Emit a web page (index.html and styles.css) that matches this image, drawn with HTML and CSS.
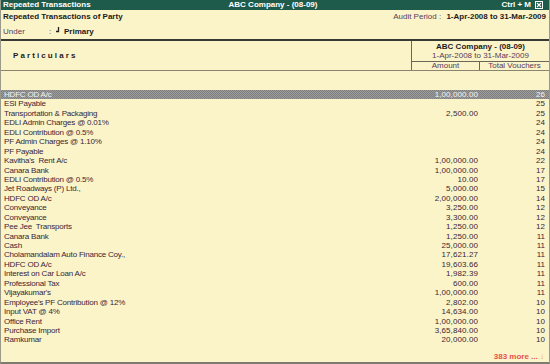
FILE: index.html
```html
<!doctype html>
<html lang="en">
  <head>
    <meta charset="utf-8">
    <meta name="viewport" content="width=device-width, initial-scale=1">
    <title>Repeated Transactions</title>
    <link rel="stylesheet" href="styles.css">
  </head>
  <body>
    <div class="window">
      <div class="titlebar">
        <span class="tb-left">Repeated Transactions</span>
        <span class="tb-center">ABC Company - (08-09)</span>
        <span class="tb-right">Ctrl + M
          <svg class="close" width="8" height="8" viewBox="0 0 8 8">
            <rect x="0.5" y="0.5" width="7" height="7" fill="none" stroke="#fff"/>
            <path d="M2 2 L6 6 M6 2 L2 6" stroke="#fff" stroke-width="1.2"/>
          </svg>
        </span>
      </div>

      <div class="report-head">
        <div class="head-line">
          <span class="report-title">Repeated Transactions of Party</span>
          <span class="audit">Audit Period : <b>1-Apr-2008 to 31-Mar-2009</b></span>
        </div>
        <div class="head-line under">
          <span class="under-label">Under</span>
          <span class="colon">:</span>
          <svg class="hook" width="5" height="6" viewBox="0 0 5 6">
            <path d="M3.5 0 V4.5 H1" fill="none" stroke="#222" stroke-width="1.3"/>
          </svg>
          <b>Primary</b>
        </div>
      </div>

      <div class="colhead">
        <div class="particulars">Particulars</div>
        <div class="period-block">
          <div class="period-top">
            <div class="company">ABC Company - (08-09)</div>
            <div class="dates">1-Apr-2008 to 31-Mar-2009</div>
          </div>
          <div class="period-cols">
            <div class="pc-amount">Amount</div>
            <div class="pc-total">Total Vouchers</div>
          </div>
        </div>
      </div>

      <div class="rows">
        <div class="row selected"><span>HDFC OD A/c</span><span class="amt">1,00,000.00</span><span class="cnt">26</span></div>
        <div class="row"><span>ESI Payable</span><span class="amt"></span><span class="cnt">25</span></div>
        <div class="row"><span>Transportation &amp; Packaging</span><span class="amt">2,500.00</span><span class="cnt">25</span></div>
        <div class="row"><span>EDLI Admin Charges @ 0.01%</span><span class="amt"></span><span class="cnt">24</span></div>
        <div class="row"><span>EDLI Contribution @ 0.5%</span><span class="amt"></span><span class="cnt">24</span></div>
        <div class="row"><span>PF Admin Charges @ 1.10%</span><span class="amt"></span><span class="cnt">24</span></div>
        <div class="row"><span>PF Payable</span><span class="amt"></span><span class="cnt">24</span></div>
        <div class="row"><span>Kavitha's&nbsp; Rent A/c</span><span class="amt">1,00,000.00</span><span class="cnt">22</span></div>
        <div class="row"><span>Canara Bank</span><span class="amt">1,00,000.00</span><span class="cnt">17</span></div>
        <div class="row"><span>EDLI Contribution @ 0.5%</span><span class="amt">10.00</span><span class="cnt">17</span></div>
        <div class="row"><span>Jet Roadways (P) Ltd.,</span><span class="amt">5,000.00</span><span class="cnt">15</span></div>
        <div class="row"><span>HDFC OD A/c</span><span class="amt">2,00,000.00</span><span class="cnt">14</span></div>
        <div class="row"><span>Conveyance</span><span class="amt">3,250.00</span><span class="cnt">12</span></div>
        <div class="row"><span>Conveyance</span><span class="amt">3,300.00</span><span class="cnt">12</span></div>
        <div class="row"><span>Pee Jee&nbsp; Transports</span><span class="amt">1,250.00</span><span class="cnt">12</span></div>
        <div class="row"><span>Canara Bank</span><span class="amt">1,250.00</span><span class="cnt">11</span></div>
        <div class="row"><span>Cash</span><span class="amt">25,000.00</span><span class="cnt">11</span></div>
        <div class="row"><span>Cholamandalam Auto Finance Coy.,</span><span class="amt">17,621.27</span><span class="cnt">11</span></div>
        <div class="row"><span>HDFC OD A/c</span><span class="amt">19,603.66</span><span class="cnt">11</span></div>
        <div class="row"><span>Interest on Car Loan A/c</span><span class="amt">1,982.39</span><span class="cnt">11</span></div>
        <div class="row"><span>Professional Tax</span><span class="amt">600.00</span><span class="cnt">11</span></div>
        <div class="row"><span>Vijayakumar's</span><span class="amt">1,00,000.00</span><span class="cnt">11</span></div>
        <div class="row"><span>Employee's PF Contribution @ 12%</span><span class="amt">2,802.00</span><span class="cnt">10</span></div>
        <div class="row"><span>Input VAT @ 4%</span><span class="amt">14,634.00</span><span class="cnt">10</span></div>
        <div class="row"><span>Office Rent</span><span class="amt">1,00,000.00</span><span class="cnt">10</span></div>
        <div class="row"><span>Purchase Import</span><span class="amt">3,65,840.00</span><span class="cnt">10</span></div>
        <div class="row"><span>Ramkumar</span><span class="amt">20,000.00</span><span class="cnt">10</span></div>
      </div>

      <div class="more">383 more ... <span class="arrow">&#8595;</span></div>
    </div>
  </body>
</html>
```

FILE: styles.css
```css
html, body {
  margin: 0;
  padding: 0;
}
body {
  background: #fbf4c8;
  font-family: "Liberation Sans", Arial, sans-serif;
  font-size: 8px;
  color: #3a2536;
}
.window {
  width: 550px;
  height: 364px;
  box-sizing: border-box;
  display: flex;
  flex-direction: column;
  background: #fbf4c8;
  border-left: 1px solid #9a9a8a;
  border-right: 1px solid #9a9a8a;
  border-bottom: 2px solid #7c7c70;
}
.titlebar {
  height: 10px;
  background: #1f5b4b;
  color: #fff;
  font-weight: bold;
  line-height: 10px;
  display: grid;
  grid-template-columns: 1fr auto 1fr;
  padding: 0 6px 0 2px;
}
.tb-center {
  text-align: center;
}
.tb-right {
  display: flex;
  justify-content: flex-end;
  align-items: center;
  gap: 4px;
}
.close {
  display: block;
}
.report-head {
  padding: 1px 3px 0 2px;
  height: 29px;
  box-sizing: border-box;
}
.head-line {
  display: flex;
  align-items: center;
  height: 11px;
  line-height: 11px;
}
.report-title {
  font-weight: bold;
  color: #1e1a1e;
  flex: 1;
}
.audit {
  color: #5a3a5a;
}
.audit b {
  color: #1e1a1e;
  margin-left: 3px;
}
.under {
  margin-top: 4px;
}
.under-label {
  color: #5a3a5a;
  width: 46px;
}
.colon {
  color: #5a3a5a;
  width: 6px;
}
.hook {
  margin: 0 4px 3px 0;
}
.under b {
  color: #1e1a1e;
}
.colhead {
  display: flex;
  height: 29px;
  border-top: 2px solid #3a3a34;
  border-bottom: 1px solid #8a8470;
}
.particulars {
  flex: 1;
  display: flex;
  align-items: center;
  padding-left: 12px;
  font-weight: bold;
  letter-spacing: 2.1px;
  color: #1e1a1e;
}
.period-block {
  width: 137px;
  border-left: 1px solid #6a6658;
  display: flex;
  flex-direction: column;
}
.period-top {
  height: 21px;
  border-bottom: 1px solid #6a6658;
  text-align: center;
  line-height: 9px;
  padding-top: 1px;
  box-sizing: border-box;
}
.company {
  font-weight: bold;
  color: #1e1a1e;
}
.dates {
  color: #5a3a5a;
}
.period-cols {
  flex: 1;
  display: flex;
  line-height: 8px;
  color: #5a3a5a;
  text-align: center;
}
.pc-amount {
  width: 67px;
  border-right: 1px solid #6a6658;
}
.pc-total {
  flex: 1;
}
.rows {
  flex: 1;
  padding-top: 19px;
}
.row {
  display: grid;
  grid-template-columns: 1fr 68px 68px;
  height: 9.45px;
  line-height: 9.45px;
  white-space: nowrap;
}
.row span:first-child {
  padding-left: 3px;
  letter-spacing: -0.2px;
}
.amt {
  text-align: right;
  padding-right: 3px;
  letter-spacing: 0.1px;
}
.cnt {
  text-align: right;
  padding-right: 4px;
}
.row.selected {
  background: repeating-conic-gradient(#7e7e7e 0 25%, #9c9c9c 0 50%) 0 0 / 2px 2px;
  color: #f4f4f4;
}
.more {
  height: 11px;
  line-height: 11px;
  text-align: right;
  padding-right: 5px;
  color: #e8504a;
  font-weight: bold;
}
.arrow {
  color: #e8a070;
  font-weight: normal;
}
```
